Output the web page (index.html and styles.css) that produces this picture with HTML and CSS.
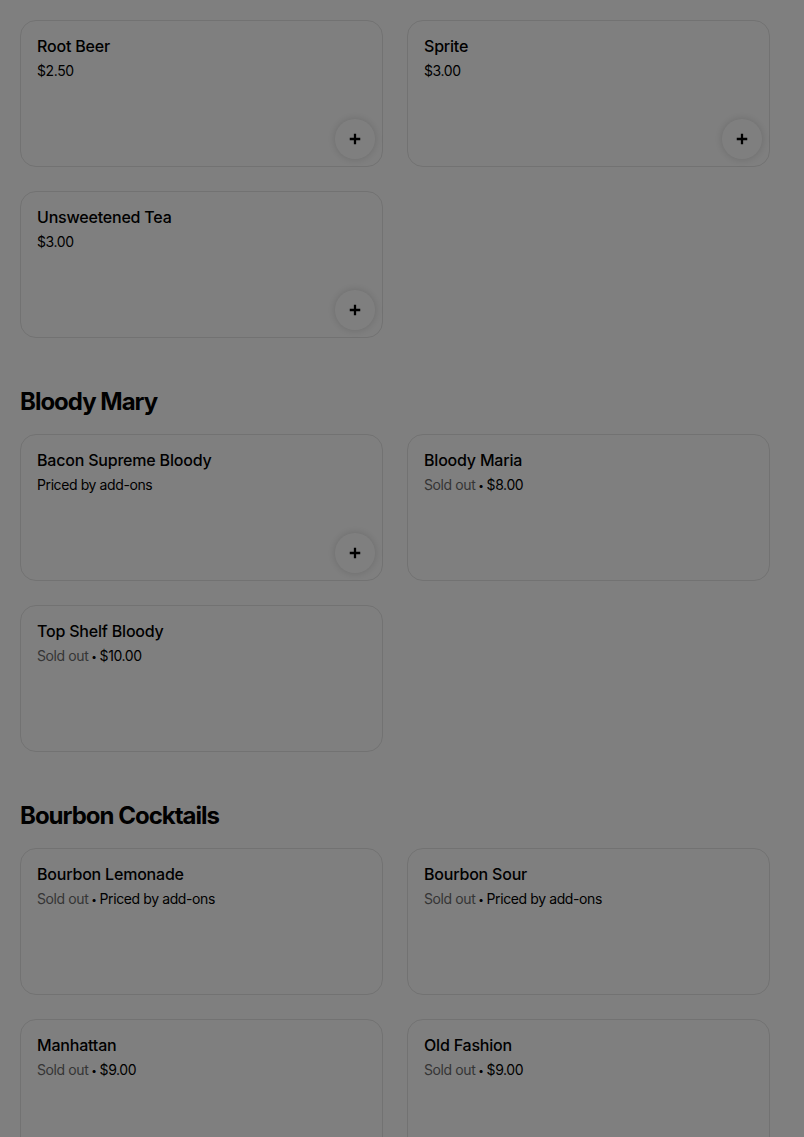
FILE: index.html
```html
<!DOCTYPE html>
<html lang="en">
<head>
	<meta charset="UTF-8">
	<title>menu</title>
	<link rel="stylesheet" href="styles.css">
</head>
<body>
	<div id="menu">
		<div class="grid">
			<div class="item">
				<div class="name">Root Beer</div>
				<div class="meta">$2.50</div>
				<button class="add"><svg viewBox="0 0 16 16"><path d="M8 2v12M2 8h12"/></svg></button>
			</div>
			<div class="item">
				<div class="name">Sprite</div>
				<div class="meta">$3.00</div>
				<button class="add"><svg viewBox="0 0 16 16"><path d="M8 2v12M2 8h12"/></svg></button>
			</div>
			<div class="item">
				<div class="name">Unsweetened Tea</div>
				<div class="meta">$3.00</div>
				<button class="add"><svg viewBox="0 0 16 16"><path d="M8 2v12M2 8h12"/></svg></button>
			</div>
		</div>

		<h2>Bloody Mary</h2>
		<div class="grid">
			<div class="item">
				<div class="name">Bacon Supreme Bloody</div>
				<div class="meta">Priced by add-ons</div>
				<button class="add"><svg viewBox="0 0 16 16"><path d="M8 2v12M2 8h12"/></svg></button>
			</div>
			<div class="item">
				<div class="name">Bloody Maria</div>
				<div class="meta"><span class="out">Sold out</span><span class="sep">•</span>$8.00</div>
			</div>
			<div class="item">
				<div class="name">Top Shelf Bloody</div>
				<div class="meta"><span class="out">Sold out</span><span class="sep">•</span>$10.00</div>
			</div>
		</div>

		<h2>Bourbon Cocktails</h2>
		<div class="grid">
			<div class="item">
				<div class="name">Bourbon Lemonade</div>
				<div class="meta"><span class="out">Sold out</span><span class="sep">•</span>Priced by add-ons</div>
			</div>
			<div class="item">
				<div class="name">Bourbon Sour</div>
				<div class="meta"><span class="out">Sold out</span><span class="sep">•</span>Priced by add-ons</div>
			</div>
			<div class="item">
				<div class="name">Manhattan</div>
				<div class="meta"><span class="out">Sold out</span><span class="sep">•</span>$9.00</div>
			</div>
			<div class="item">
				<div class="name">Old Fashion</div>
				<div class="meta"><span class="out">Sold out</span><span class="sep">•</span>$9.00</div>
			</div>
		</div>
	</div>
	<div id="shade"></div>
</body>
</html>
```

FILE: styles.css
```css
html,
body {
	margin: 0;
	padding: 0;
	background: #fff;
}
body {
	font-family: Inter, "Liberation Sans", sans-serif;
	color: #000;
}
#menu {
	width: 750px;
	padding: 20px 34px 0 20px;
}
#menu h2 {
	margin: 48px 0 16px;
	font-size: 24px;
	line-height: 32px;
	font-weight: 700;
	letter-spacing: -1px;
}
.grid {
	display: grid;
	grid-template-columns: 1fr 1fr;
	gap: 24px;
}
.item {
	position: relative;
	height: 145px;
	padding: 0 16px;
	border: 1px solid #e4e4e4;
	border-radius: 16px;
}
.item .name {
	margin-top: 15px;
	font-size: 16px;
	line-height: 20px;
	font-weight: 500;
	letter-spacing: -0.2px;
}
.item .meta {
	margin-top: 5px;
	font-size: 14px;
	line-height: 20px;
	letter-spacing: -0.4px;
}
.item .out {
	color: #6b6b6b;
}
.item .sep {
	margin: 0 3px;
	font-size: 10px;
	vertical-align: 1px;
}
.add {
	position: absolute;
	right: 7px;
	bottom: 7px;
	width: 40px;
	height: 40px;
	padding: 0;
	border: none;
	border-radius: 50%;
	background: #fff;
	box-shadow: 0 0 8px rgba(0, 0, 0, .16);
	display: flex;
	align-items: center;
	justify-content: center;
}
.add svg {
	width: 14px;
	height: 14px;
	fill: none;
	stroke: #000;
	stroke-width: 2.6;
}
#shade {
	position: fixed;
	top: 0;
	left: 0;
	right: 0;
	bottom: 0;
	background: rgba(0, 0, 0, .5);
}
```
